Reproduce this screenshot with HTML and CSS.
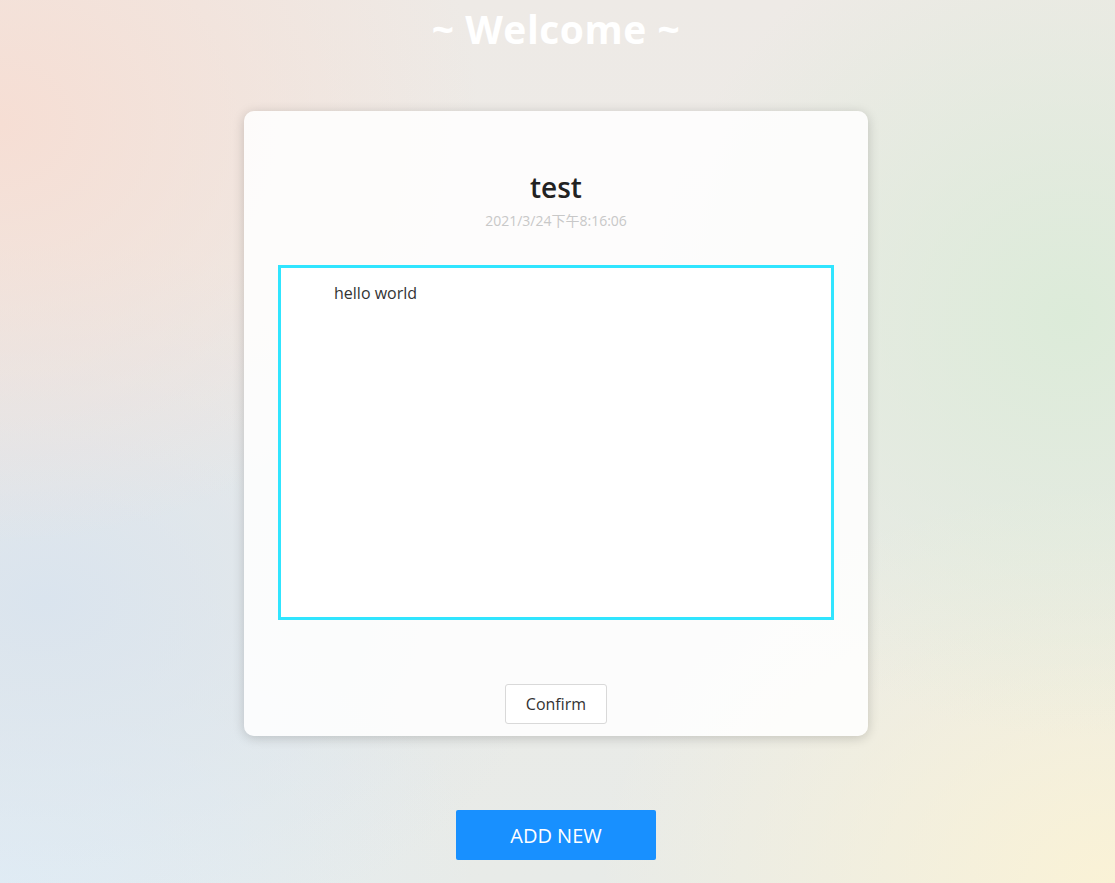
FILE: index.html
```html
<!DOCTYPE html>
<html>
<head>
<meta charset="utf-8">
<link rel="stylesheet" href="styles.css">
</head>
<body>
<div class="page">
  <h1 class="welcome">~ Welcome ~</h1>
  <div class="card">
    <div class="card-head">
      <div class="card-title">test</div>
      <div class="card-date">2021/3/24下午8:16:06</div>
    </div>
    <div class="editor">hello world</div>
    <div class="card-foot">
      <button class="confirm">Confirm</button>
    </div>
  </div>
  <button class="add">ADD NEW</button>
</div>
</body>
</html>
```
FILE: styles.css
```css
html, body {
  margin: 0;
  padding: 0;
  height: 100%;
}
body {
  font-family: "Open Sans", "Noto Sans", "Noto Sans CJK SC", sans-serif;
  background-color: #ebebe6;
  background-image:
    radial-gradient(ellipse 480px 420px at 0% 14%, rgba(246, 222, 212, 1), rgba(246, 222, 212, 0)),
    radial-gradient(ellipse 420px 420px at 96% 36%, rgba(220, 235, 217, 1), rgba(220, 235, 217, 0)),
    radial-gradient(ellipse 520px 360px at 4% 68%, rgba(218, 228, 238, 1), rgba(218, 228, 238, 0)),
    radial-gradient(ellipse 480px 320px at 0% 100%, rgba(225, 237, 246, 1), rgba(225, 237, 246, 0)),
    radial-gradient(ellipse 520px 400px at 100% 100%, rgba(250, 242, 214, 1), rgba(250, 242, 214, 0)),
    linear-gradient(180deg, #eeeae6 0%, #e8ebe8 100%);
  overflow: hidden;
}
.page {
  display: flex;
  flex-direction: column;
  align-items: center;
  width: 1112px;
  height: 883px;
}
.welcome {
  margin: 4px 0 0;
  color: #ffffff;
  font-size: 39px;
  font-weight: 700;
  line-height: 50px;
  letter-spacing: 0.5px;
}
.card {
  margin-top: 57px;
  width: 624px;
  height: 625px;
  box-sizing: border-box;
  background: rgba(255, 255, 255, 0.86);
  border-radius: 10px;
  box-shadow: 0 2px 12px rgba(0, 0, 0, 0.18);
  display: flex;
  flex-direction: column;
  align-items: center;
  padding-top: 56px;
}
.card-head {
  text-align: center;
}
.card-title {
  font-size: 28px;
  font-weight: 600;
  color: #222;
  line-height: 40px;
}
.card-date {
  font-size: 14px;
  color: #c8c8c8;
  line-height: 20px;
  margin-top: 4px;
}
.editor {
  margin-top: 34px;
  width: 556px;
  height: 355px;
  box-sizing: border-box;
  border: 3px solid #30e5ff;
  background: #fff;
  padding: 13px 20px 0 53px;
  font-size: 16px;
  color: #333;
  line-height: 24px;
}
.card-foot {
  margin-top: 64px;
}
.confirm {
  font-family: inherit;
  width: 102px;
  height: 40px;
  background: #fff;
  border: 1px solid #d9d9d9;
  border-radius: 3px;
  font-size: 16px;
  color: #333;
  cursor: pointer;
}
.add {
  margin-top: 74px;
  width: 200px;
  height: 50px;
  background: #1890ff;
  border: none;
  border-radius: 2px;
  color: #fff;
  font-family: inherit;
  font-size: 20px;
  cursor: pointer;
}
```
